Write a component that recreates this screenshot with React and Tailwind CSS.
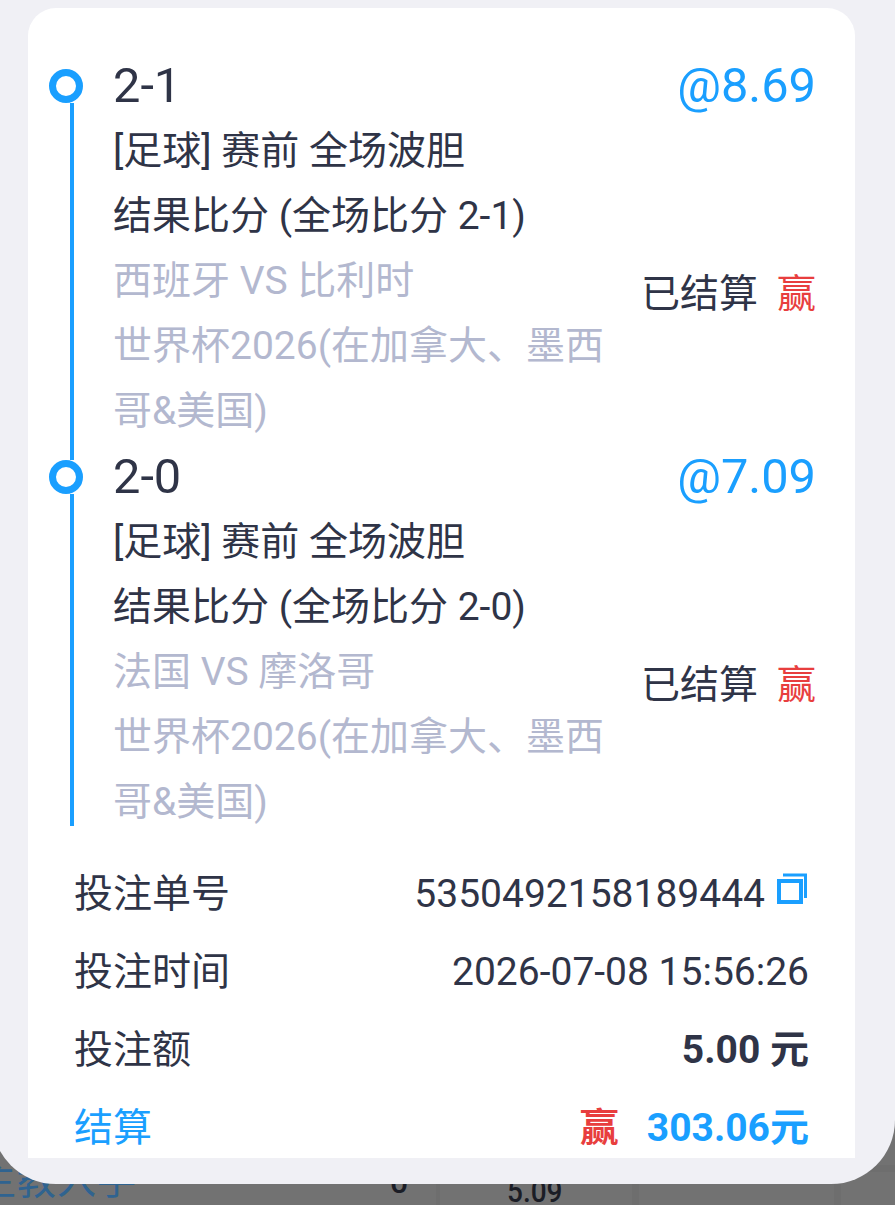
const font = { fontFamily: '"Roboto","Noto Sans CJK SC",sans-serif' };

function Item({ score, odds, line1, line2, teams, last }) {
  return (
    <div className="flex h-[391px]">
      <div className="w-[85px] shrink-0 flex flex-col items-start">
        <div className="mt-[18px] ml-[21px] w-[34px] h-[34px] shrink-0 rounded-full border-[7px] border-[#1a9fff] bg-white" />
        <div className={`ml-[42px] w-[4px] flex-1 bg-[#1a9fff] ${last ? "mb-[7px]" : "-mb-[18px]"}`} />
      </div>
      <div className="w-[500px] shrink-0">
        <div className="h-[66px] text-[48.75px] leading-[70px] text-[#2f3447]">{score}</div>
        <div className="mt-[2px] text-[39px] leading-[65px] text-[#2f3447]">{line1}</div>
        <div className="text-[39px] leading-[65px] text-[#2f3447]">{line2}</div>
        <div className="text-[39px] leading-[65px] text-[#b3b8cf]">{teams}</div>
        <div className="text-[39px] leading-[65px] text-[#b3b8cf]">世界杯2026(在加拿大、墨西哥&美国)</div>
      </div>
      <div className="flex-1 flex flex-col items-end pr-[39px] min-w-0">
        <div className="h-[66px] text-[48.75px] leading-[70px] text-[#1a9fff] whitespace-nowrap">{odds}</div>
        <div className="mt-[145px] whitespace-nowrap flex items-center">
          <span className="text-[39px] leading-[65px] text-[#2f3447]">已结算</span>
          <span className="ml-[19px] text-[39px] leading-[65px] text-[#e83e3e]">赢</span>
        </div>
      </div>
    </div>
  );
}

function Row({ label, children, labelClass = "text-[#2f3447]" }) {
  return (
    <div className="h-[78px] flex items-center justify-between">
      <span className={`text-[39px] ${labelClass}`}>{label}</span>
      {children}
    </div>
  );
}

export default function App() {
  return (
    <div className="w-[895px] h-[1205px] overflow-hidden bg-[#727272] relative" style={font}>
      <div className="absolute left-[-23px] top-[1159px] text-[39px] leading-[44px] tracking-[1px] text-[#2f6390] whitespace-nowrap">主教入手</div>
      <div className="absolute left-[390px] top-[1160px] text-[32px] leading-[44px] font-medium text-[#1b1d26]">0</div>
      <div className="absolute left-[507px] top-[1169px] text-[32px] leading-[44px] font-medium text-[#1b1d26] origin-left scale-x-[0.875]">5.09</div>
      <div className="absolute left-[436px] top-[1184px] w-[4px] h-[21px] bg-[#6e6e6e]" />
      <div className="absolute left-[632px] top-[1184px] w-[7px] h-[21px] bg-[#6e6e6e]" />
      <div className="absolute left-[834px] top-[1184px] w-[7px] h-[21px] bg-[#6e6e6e]" />
      <div className="absolute left-[841px] top-[1165px] w-[54px] h-[7px] bg-[#6e6e6e]" />
      <div className="relative h-[1184px] -ml-[8px] bg-[#f0f0f5] rounded-b-[64px] pt-[8px] pl-[36px] pr-[40px] overflow-hidden">
        <div className="h-[1150px] bg-white rounded-t-[28px] pt-[43px] overflow-hidden">
          <Item score="2-1" odds="@8.69" line1="[足球] 赛前 全场波胆" line2="结果比分 (全场比分 2-1)" teams="西班牙 VS 比利时" />
          <Item score="2-0" odds="@7.09" line1="[足球] 赛前 全场波胆" line2="结果比分 (全场比分 2-0)" teams="法国 VS 摩洛哥" last />
          <div className="pl-[46px] pr-[46px] mt-[22px]">
            <Row label="投注单号">
              <span className="flex items-center text-[39px] text-[#2f3447]">
                5350492158189444
                <svg className="ml-[12px] -mt-[12px]" width="32" height="31" viewBox="0 0 32 31" fill="none" stroke="#1a9fff">
                  <rect x="2" y="8" width="22" height="21" strokeWidth="4" />
                  <path d="M6 2H28.5V25" strokeWidth="3" />
                </svg>
              </span>
            </Row>
            <Row label="投注时间">
              <span className="text-[39px] text-[#2f3447]">2026-07-08 15:56:26</span>
            </Row>
            <Row label="投注额">
              <span className="text-[39px] font-bold text-[#2f3447]">5.00 元</span>
            </Row>
            <Row label="结算" labelClass="text-[#1a9fff]">
              <span className="flex items-center text-[39px] font-bold">
                <span className="text-[#e83e3e]">赢</span>
                <span className="ml-[28px] text-[#1a9fff]">303.06元</span>
              </span>
            </Row>
          </div>
        </div>
      </div>
    </div>
  );
}
